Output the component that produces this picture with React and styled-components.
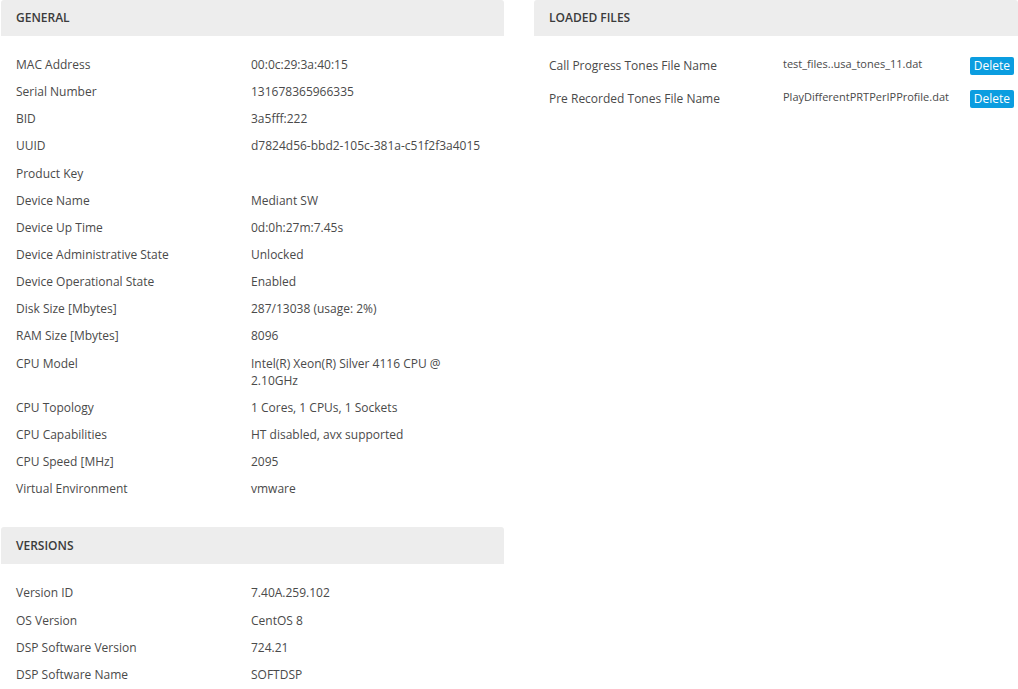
import styled, { createGlobalStyle } from "styled-components";

const GlobalStyle = createGlobalStyle`
  body {
    margin: 0;
    background: #fff;
    font-family: "Open Sans", "Liberation Sans", sans-serif;
    font-size: 12px;
    line-height: 1.428571;
    color: #4a4a4a;
  }
`;

const Page = styled.div`
  display: grid;
  grid-template-columns: 503px 484px;
  column-gap: 30px;
  align-items: start;
  padding-left: 1px;
`;

const Column = styled.div`
  display: flex;
  flex-direction: column;
  gap: 25px;
`;

const Panel = styled.section``;

const PanelHeader = styled.h3`
  margin: 0;
  height: ${(p) => p.$height || 36}px;
  display: flex;
  align-items: center;
  padding-left: 15px;
  background: #ededed;
  border-radius: 3px 3px 0 0;
  font-size: 12px;
  font-weight: 600;
  color: #3b3b3b;
  text-transform: uppercase;
`;

const PanelBody = styled.div`
  margin-top: ${(p) => p.$top || 15}px;
`;

const InfoRow = styled.div`
  display: grid;
  grid-template-columns: 235px 234px;
  padding: 5px 15px;
`;

const Label = styled.div``;
const Value = styled.div``;

const FileRow = styled.div`
  display: grid;
  grid-template-columns: 234px 1fr auto;
  align-items: center;
  height: 33px;
  padding: 0 4px 0 15px;
`;

const FileName = styled.div`
  font-size: 11px;
  margin-top: -3px;
`;

const DeleteButton = styled.button`
  height: 18px;
  padding: 0 4px;
  border: none;
  border-radius: 2px;
  background: #0b9de0;
  color: #fff;
  font-family: inherit;
  font-size: 12px;
  line-height: 18px;
  cursor: pointer;
`;

const general = [
  ["MAC Address", "00:0c:29:3a:40:15"],
  ["Serial Number", "131678365966335"],
  ["BID", "3a5fff:222"],
  ["UUID", "d7824d56-bbd2-105c-381a-c51f2f3a4015"],
  ["Product Key", ""],
  ["Device Name", "Mediant SW"],
  ["Device Up Time", "0d:0h:27m:7.45s"],
  ["Device Administrative State", "Unlocked"],
  ["Device Operational State", "Enabled"],
  ["Disk Size [Mbytes]", "287/13038 (usage: 2%)"],
  ["RAM Size [Mbytes]", "8096"],
  ["CPU Model", "Intel(R) Xeon(R) Silver 4116 CPU @ 2.10GHz"],
  ["CPU Topology", "1 Cores, 1 CPUs, 1 Sockets"],
  ["CPU Capabilities", "HT disabled, avx supported"],
  ["CPU Speed [MHz]", "2095"],
  ["Virtual Environment", "vmware"],
];

const versions = [
  ["Version ID", "7.40A.259.102"],
  ["OS Version", "CentOS 8"],
  ["DSP Software Version", "724.21"],
  ["DSP Software Name", "SOFTDSP"],
];

const files = [
  ["Call Progress Tones File Name", "test_files..usa_tones_11.dat"],
  ["Pre Recorded Tones File Name", "PlayDifferentPRTPerIPProfile.dat"],
];

const InfoPanel = ({ title, rows, headerHeight }) => (
  <Panel>
    <PanelHeader $height={headerHeight}>{title}</PanelHeader>
    <PanelBody>
      {rows.map(([label, value]) => (
        <InfoRow key={label}>
          <Label>{label}</Label>
          <Value>{value || "\u00a0"}</Value>
        </InfoRow>
      ))}
    </PanelBody>
  </Panel>
);

export default function App() {
  return (
    <>
      <GlobalStyle />
      <Page>
        <Column>
          <InfoPanel title="General" rows={general} />
          <InfoPanel title="Versions" rows={versions} headerHeight={37} />
        </Column>
        <Column>
          <Panel>
            <PanelHeader>Loaded Files</PanelHeader>
            <PanelBody $top={13}>
              {files.map(([label, file]) => (
                <FileRow key={label}>
                  <Label>{label}</Label>
                  <FileName>{file}</FileName>
                  <DeleteButton>Delete</DeleteButton>
                </FileRow>
              ))}
            </PanelBody>
          </Panel>
        </Column>
      </Page>
    </>
  );
}
